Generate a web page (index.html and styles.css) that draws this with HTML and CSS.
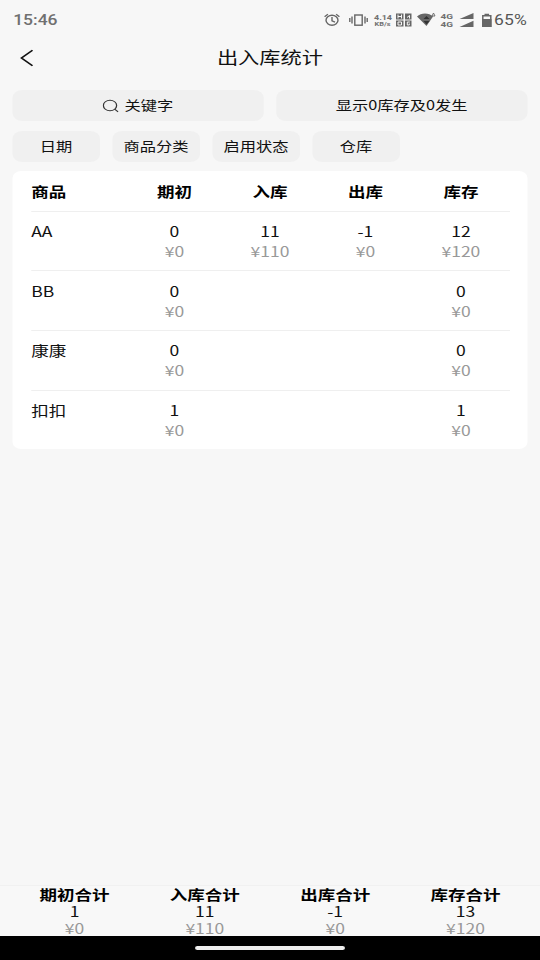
FILE: index.html
```html
<!DOCTYPE html>
<html lang="zh-CN">
<head>
<meta charset="utf-8">
<title>出入库统计</title>
<link rel="stylesheet" href="styles.css">
</head>
<body>
<div class="screen">
  <div class="status">
    <span class="clock">15:46</span>
    <svg class="status-icons" width="138" height="20" viewBox="0 0 172.5 20" preserveAspectRatio="none">
      <g fill="none" stroke="#666" stroke-width="1.4">
        <ellipse cx="12" cy="10.3" rx="6" ry="5"/>
        <path d="M12 7v3.800l3 1.400M4.600 6.700l3.300-2.500M19.400 6.700l-3.300-2.500"/>
        <rect x="34.800" y="5" width="7.400" height="10.200"/>
        <path d="M32 6.500v7M45 6.500v7M29.800 8v4M47.200 8v4"/>
      </g>
      <g font-family="Roboto, sans-serif" font-weight="700" fill="#707070">
        <text x="54" y="9.500" font-size="8" textLength="18" lengthAdjust="spacingAndGlyphs">4.14</text>
        <text x="54.500" y="16" font-size="6" textLength="16" lengthAdjust="spacingAndGlyphs">KB/s</text>
        <text x="120.500" y="8.500" font-size="8" textLength="12.500" lengthAdjust="spacingAndGlyphs">4G</text>
        <text x="120.500" y="16.500" font-size="8" textLength="12.500" lengthAdjust="spacingAndGlyphs">4G</text>
      </g>
      <path fill="#666" d="M76 3.500h7.500v6H76zM76 10.500h7.500v6H76zM85 3.500h6.500v6H85zM85 10.500h6.500v6H85z"/>
      <path fill="none" stroke="#f7f7f7" d="M78 4.500v4M81.500 4.500v4M78 6.500h3.500M78 12h3.500v3H78zM87 7.500l2.500-2v3M89.800 12h-2.500v3h2v-1.500"/>
      <path fill="#666" d="M97 6.500C101 2.600 109 2.600 113 6.500L106.500 16z"/>
      <path fill="#333" d="M103.500 9l3-3 3 3zM103.500 11h6l-3 3.500z"/>
      <path fill="none" stroke="#666" stroke-width=".9" d="M113.500 3l-1.500 3h3z"/>
      <path fill="#666" d="M139.500 9L153.500 3v6zM139.500 17l14-6.200V17z"/>
      <path fill="none" stroke="#666" stroke-width="1.500" d="M162.800 5.700h8v10.500h-8z"/>
      <path fill="#666" d="M164.500 3.700h4.600v2h-4.600zM162 9h9.500v8H162z"/>
    </svg>
    <span class="percent">65%</span>
  </div>

  <header class="title-bar">
    <svg class="back" width="12" height="18" viewBox="0 0 12 18"><path d="M10 1.200L1.200 9 10 16.800"/></svg>
    <h1>出入库统计</h1>
  </header>

  <div class="search-row">
    <div class="pill"><svg class="lens" width="13" height="14" viewBox="0 0 13 14"><circle cx="6" cy="6.500" r="5.300"/><path d="M9.700 10.200l2.800 2.600"/></svg>关键字</div>
    <div class="pill">显示0库存及0发生</div>
  </div>
  <div class="filter-row">
    <div class="pill">日期</div>
    <div class="pill">商品分类</div>
    <div class="pill">启用状态</div>
    <div class="pill">仓库</div>
  </div>

  <main class="card">
    <div class="row head"><div>商品</div><div>期初</div><div>入库</div><div>出库</div><div>库存</div></div>
    <div class="row"><div>AA</div><div>0<small>¥0</small></div><div>11<small>¥110</small></div><div>-1<small>¥0</small></div><div>12<small>¥120</small></div></div>
    <div class="row"><div>BB</div><div>0<small>¥0</small></div><div></div><div></div><div>0<small>¥0</small></div></div>
    <div class="row"><div>康康</div><div>0<small>¥0</small></div><div></div><div></div><div>0<small>¥0</small></div></div>
    <div class="row"><div>扣扣</div><div>1<small>¥0</small></div><div></div><div></div><div>1<small>¥0</small></div></div>
  </main>

  <footer class="totals">
    <div><b>期初合计</b>1<small>¥0</small></div>
    <div><b>入库合计</b>11<small>¥110</small></div>
    <div><b>出库合计</b>-1<small>¥0</small></div>
    <div><b>库存合计</b>13<small>¥120</small></div>
  </footer>
  <div class="nav"><i></i></div>
</div>
</body>
</html>
```
FILE: styles.css
```css
* { box-sizing: border-box; }
html, body { margin: 0; width: 540px; height: 960px; overflow: hidden; background: #f7f7f7; }

/* The screen is laid out 432 units wide and stretched to the 540px viewport. */
.screen {
  width: 432px;
  height: 960px;
  transform: scaleX(1.25);
  transform-origin: 0 0;
  display: flex;
  flex-direction: column;
  font-family: "Noto Sans CJK SC", sans-serif;
  font-size: 14px;
  color: #111;
}

.status {
  height: 40px;
  padding: 0 10.5px 0 10.5px;
  display: flex;
  align-items: center;
  font-family: Roboto, sans-serif;
  font-weight: 500;
  color: #707070;
}
.status-icons { margin-left: auto; flex: none; }
.percent { margin-left: 1px; font-weight: 400; color: #555; letter-spacing: .1px; }

.title-bar {
  height: 36px;
  display: grid;
  grid-template-columns: 40px 1fr 40px;
  align-items: center;
}
.back { margin-left: 15.6px; fill: none; stroke: #111; stroke-width: 1.5; }
h1 { margin: 0 0 2px; text-align: center; font-size: 17px; line-height: 34px; font-weight: 400; }

.pill {
  height: 31px;
  padding-bottom: 2px;
  border-radius: 8px;
  background: #f0f0f0;
  display: flex;
  align-items: center;
  justify-content: center;
  font-size: 13px;
}
.lens { margin: 2px 4.5px 0 0; fill: none; stroke: #333; stroke-width: 1; }
.search-row { display: grid; grid-template-columns: 1fr 1fr; gap: 9.6px; margin: 14px 10px 0 9.6px; }
.filter-row { display: grid; grid-template-columns: repeat(4, 70.4px); gap: 9.6px; margin: 10px 0 0 9.6px; }

.card {
  margin: 9px 10px 0 9.6px;
  height: 278px;
  padding: 0 14.2px 0 15.4px;
  border-radius: 7px;
  background: #fff;
}
.row {
  height: 59.6px;
  padding-top: 9.4px;
  border-bottom: 1px solid #efefef;
  display: grid;
  grid-template-columns: repeat(5, 76.4px);
  line-height: 20px;
  text-align: center;
}
.row > :first-child { text-align: left; }
.row:last-child { border-bottom: 0; }
.head { height: 40.8px; padding-top: 10px; font-weight: 700; color: #000; }
small { display: block; font-size: 14px; color: #999; }

.totals {
  margin-top: auto;
  height: 51px;
  border-top: 1px solid #f1f1f1;
  padding: 0 7.5px;
  background: #f8f8f8;
  display: grid;
  grid-template-columns: repeat(4, 1fr);
  line-height: 17px;
  text-align: center;
}
.totals > div { margin-top: -.5px; }
.totals b { display: block; color: #000; }
.nav { height: 24px; background: #000; display: flex; align-items: center; justify-content: center; }
.nav i { width: 120px; height: 4px; border-radius: 2px; background: #eee; }
```
